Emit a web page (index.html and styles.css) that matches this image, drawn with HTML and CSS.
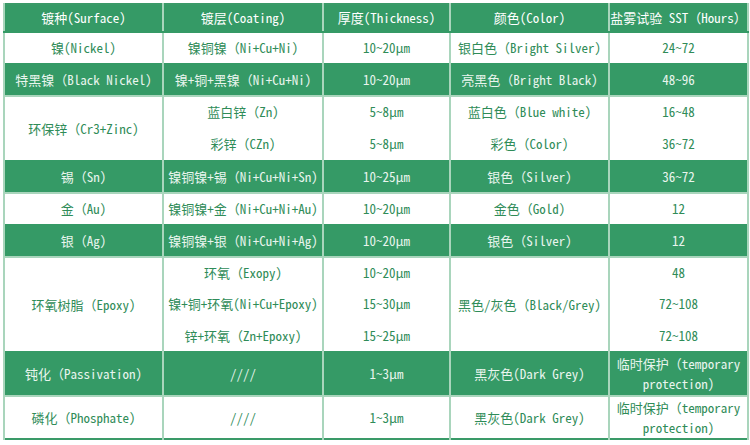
FILE: index.html
```html
<!DOCTYPE html>
<html lang="zh">
<head>
<meta charset="utf-8">
<title>镀层表</title>
<link rel="stylesheet" href="styles.css">
</head>
<body>
<table class="spec">
  <colgroup>
    <col class="c1"><col class="c2"><col class="c3"><col class="c4"><col class="c5">
  </colgroup>
  <thead>
    <tr class="head">
      <th>镀种(Surface)</th>
      <th>镀层(Coating)</th>
      <th>厚度(Thickness)</th>
      <th>颜色(Color)</th>
      <th>盐雾试验 SST（Hours）</th>
    </tr>
  </thead>
  <tbody>
    <tr class="w r32">
      <td>镍(Nickel)</td>
      <td>镍铜镍（Ni+Cu+Ni)</td>
      <td>10~20μm</td>
      <td>银白色（Bright Silver)</td>
      <td>24~72</td>
    </tr>
    <tr class="g r32">
      <td>特黑镍（Black Nickel)</td>
      <td>镍+铜+黑镍（Ni+Cu+Ni)</td>
      <td>10~20μm</td>
      <td>亮黑色（Bright Black)</td>
      <td>48~96</td>
    </tr>
    <tr class="w r32 top">
      <td rowspan="2">环保锌（Cr3+Zinc)</td>
      <td>蓝白锌（Zn)</td>
      <td>5~8μm</td>
      <td>蓝白色（Blue white)</td>
      <td>16~48</td>
    </tr>
    <tr class="w s33 sub">
      <td>彩锌（CZn)</td>
      <td>5~8μm</td>
      <td>彩色（Color)</td>
      <td>36~72</td>
    </tr>
    <tr class="g r32">
      <td>锡（Sn)</td>
      <td>镍铜镍+锡（Ni+Cu+Ni+Sn)</td>
      <td>10~25μm</td>
      <td>银色（Silver)</td>
      <td>36~72</td>
    </tr>
    <tr class="w r32">
      <td>金（Au)</td>
      <td>镍铜镍+金（Ni+Cu+Ni+Au)</td>
      <td>10~20μm</td>
      <td>金色（Gold)</td>
      <td>12</td>
    </tr>
    <tr class="g r32">
      <td>银（Ag)</td>
      <td>镍铜镍+银（Ni+Cu+Ni+Ag)</td>
      <td>10~20μm</td>
      <td>银色（Silver)</td>
      <td>12</td>
    </tr>
    <tr class="w r32 top">
      <td rowspan="3">环氧树脂（Epoxy)</td>
      <td>环氧（Exopy)</td>
      <td>10~20μm</td>
      <td rowspan="3">黑色/灰色（Black/Grey)</td>
      <td>48</td>
    </tr>
    <tr class="w s32 sub">
      <td>镍+铜+环氧(Ni+Cu+Epoxy)</td>
      <td>15~30μm</td>
      <td>72~108</td>
    </tr>
    <tr class="w s31 sub">
      <td>锌+环氧（Zn+Epoxy)</td>
      <td>15~25μm</td>
      <td>72~108</td>
    </tr>
    <tr class="g r44">
      <td>钝化（Passivation)</td>
      <td>////</td>
      <td>1~3μm</td>
      <td>黑灰色(Dark Grey)</td>
      <td class="wrap">临时保护（temporary protection)</td>
    </tr>
    <tr class="w r43">
      <td>磷化（Phosphate)</td>
      <td>////</td>
      <td>1~3μm</td>
      <td>黑灰色(Dark Grey)</td>
      <td class="wrap">临时保护（temporary protection)</td>
    </tr>
  </tbody>
</table>
</body>
</html>
```

FILE: styles.css
```css
html, body {
  margin: 0;
  padding: 0;
  background: #ffffff;
}

body {
  padding: 3px 0 0 3px;
  font-family: "Noto Sans Mono CJK SC", "Noto Sans CJK SC", "Liberation Mono", monospace;
  font-size: 13px;
}

.spec {
  border-collapse: collapse;
  table-layout: fixed;
  width: 744px;
  border: 2px solid #3a9a68;
}

.c1 { width: 159px; }
.c2 { width: 160px; }
.c3 { width: 127px; }
.c4 { width: 159px; }
.c5 { width: 139px; }

.spec th,
.spec td {
  padding: 0;
  text-align: center;
  vertical-align: middle;
  white-space: nowrap;
  border-left: 2px solid #a9d5bc;
  border-right: 2px solid #a9d5bc;
  line-height: 20px;
}

.head th {
  height: 26px;
  background: #359a66;
  color: #ffffff;
  font-weight: 500;
  font-size: 13px;
  border-bottom: 2px solid #359a66;
}

.w td {
  background: #ffffff;
  color: #2f8c58;
}

.g td {
  background: #359a66;
  color: #e9f5ee;
}

.w td { border-top: 2px solid #a9d5bc; }
.g td { border-top: 2px solid #359a66; }
.sub td { border-top: none; }

.r32 td { height: 30px; }
.s31 td { height: 31px; }
.s32 td { height: 32px; }
.s33 td { height: 33px; }
.r44 td { height: 42px; }
.r43 td { height: 41px; }

.spec td.wrap {
  white-space: normal;
  padding: 0 2px;
}
```
